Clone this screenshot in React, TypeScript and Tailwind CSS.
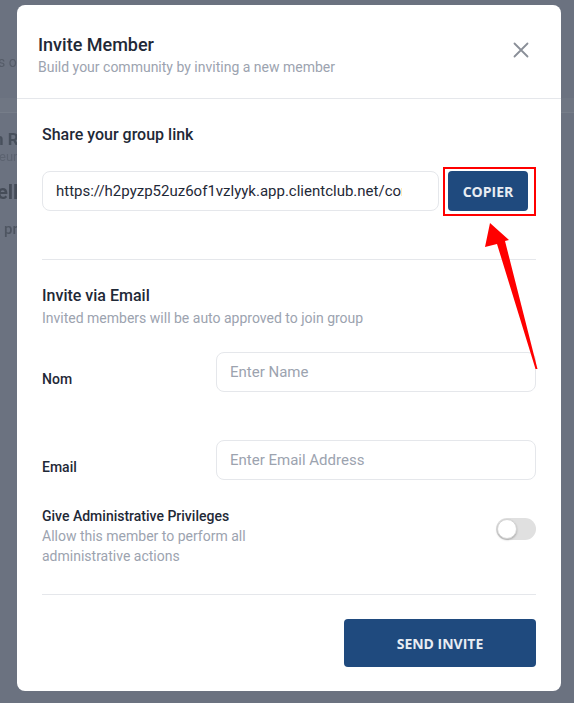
import React from "react";

function CloseIcon() {
  return (
    <svg width="16" height="16" viewBox="0 0 16 16" fill="none">
      <path d="M1.5 1.5 L14.5 14.5 M14.5 1.5 L1.5 14.5" stroke="#8a8f98" strokeWidth="1.8" strokeLinecap="round" />
    </svg>
  );
}

export default function App() {
  return (
    <div className="relative h-[703px] w-[574px] overflow-hidden bg-[#6b7280] font-['Roboto',sans-serif]">
      {/* background page (dimmed) */}
      <div className="flex flex-col blur-[0.6px]">
        <div className="h-[52px]" />
        <div className="ml-[-2px] whitespace-nowrap text-[14px] leading-[20px] text-[#555c68]">s of the</div>
        <div className="mt-[26px] h-[14px] bg-[#6f7683]" />
        <div className="h-px bg-[#767d89]" />
        <div className="mt-[16px] ml-[-6px] whitespace-nowrap text-[17px] font-bold leading-[20px] text-[#48505c]">n Ra</div>
        <div className="ml-[-1px] whitespace-nowrap text-[13px] leading-[16px] text-[#5c6370]">eurs</div>
        <div className="mt-[14px] ml-[-3px] whitespace-nowrap text-[20px] font-bold leading-[26px] text-[#454c58]">elle</div>
        <div className="mt-[14px] ml-[4px] whitespace-nowrap text-[15px] font-medium leading-[20px] text-[#4e5561]">pro</div>
      </div>

      {/* modal layer */}
      <div className="absolute inset-0 pl-[17px] pt-[5px]">
        <div className="flex h-[686px] w-[544px] flex-col rounded-[8px] bg-white">
          {/* header */}
          <div className="flex h-[94px] items-start justify-between border-b border-[#e5e7eb] pl-[21px] pr-[32px] pt-[28px]">
            <div className="flex flex-col">
              <div className="text-[18px] font-medium leading-[24px] text-[#1f2937]">Invite Member</div>
              <div className="text-[14px] leading-[20px] text-[#9ca3af]">Build your community by inviting a new member</div>
            </div>
            <div className="mt-[9px]">
              <CloseIcon />
            </div>
          </div>

          {/* body */}
          <div className="flex flex-col px-[25px] pt-[24px]">
            <div className="text-[16px] font-medium leading-[24px] text-[#1f2937]">Share your group link</div>
            <div className="mt-[24px] flex items-center gap-[9px]">
              <div className="flex h-[40px] w-[397px] items-center rounded-[8px] border border-[#e5e7eb] pl-[13px]">
                <div className="w-[346px] overflow-hidden whitespace-nowrap text-[15px] leading-[20px] text-[#1f2937]">
                  https://h2pyzp52uz6of1vzlyyk.app.clientclub.net/community/join
                </div>
              </div>
              <div className="flex h-[40px] w-[80px] items-center justify-center rounded-[4px] bg-[#1f4a7e] font-['Open_Sans',sans-serif] text-[14px] font-bold text-[#e8edf3]">
                COPIER
              </div>
            </div>

            <div className="mt-[48px] h-px bg-[#e5e7eb]" />

            <div className="mt-[24px] text-[16px] font-medium leading-[24px] text-[#1f2937]">Invite via Email</div>
            <div className="text-[14px] leading-[20px] text-[#9ca3af]">Invited members will be auto approved to join group</div>

            <div className="mt-[24px] flex items-start">
              <div className="w-[174px] pt-[17px] text-[14px] font-medium leading-[20px] text-[#1f2937]">Nom</div>
              <div className="flex h-[40px] w-[320px] items-center rounded-[8px] border border-[#e5e7eb] pl-[13px] text-[15px] text-[#9ca3af]">
                Enter Name
              </div>
            </div>

            <div className="mt-[48px] flex items-start">
              <div className="w-[174px] pt-[17px] text-[14px] font-medium leading-[20px] text-[#1f2937]">Email</div>
              <div className="flex h-[40px] w-[320px] items-center rounded-[8px] border border-[#e5e7eb] pl-[13px] text-[15px] text-[#9ca3af]">
                Enter Email Address
              </div>
            </div>

            <div className="mt-[26px] flex items-start justify-between">
              <div className="flex w-[230px] flex-col">
                <div className="text-[14px] font-medium leading-[20px] text-[#1f2937]">Give Administrative Privileges</div>
                <div className="text-[14px] leading-[20px] text-[#9ca3af]">Allow this member to perform all administrative actions</div>
              </div>
              <div className="mt-[12px] flex h-[22px] w-[40px] items-center rounded-full bg-[#e0e0e0] pl-[1px]">
                <div className="h-[20px] w-[20px] rounded-full border border-[#d4d4d4] bg-white shadow-[0_1px_2px_rgba(0,0,0,0.25)]" />
              </div>
            </div>

            <div className="mt-[28px] h-px bg-[#e5e7eb]" />

            <div className="mt-[24px] flex justify-end">
              <div className="flex h-[48px] w-[192px] items-center justify-center rounded-[4px] bg-[#1f4a7e] font-['Open_Sans',sans-serif] text-[14px] font-bold text-[#e8edf3]">
                SEND INVITE
              </div>
            </div>
          </div>
        </div>
      </div>

      {/* annotation: red box around COPIER */}
      <div className="absolute left-[443px] top-[167px] h-[49px] w-[93px] border-2 border-[#ff0000]" />

      {/* annotation: red arrow */}
      <svg className="absolute left-0 top-0" width="574" height="703" viewBox="0 0 574 703">
        <polygon
          points="490,223 509,240 505,241 537.5,369 535.5,369 497,244 485,247"
          fill="#ff0000"
        />
      </svg>
    </div>
  );
}
